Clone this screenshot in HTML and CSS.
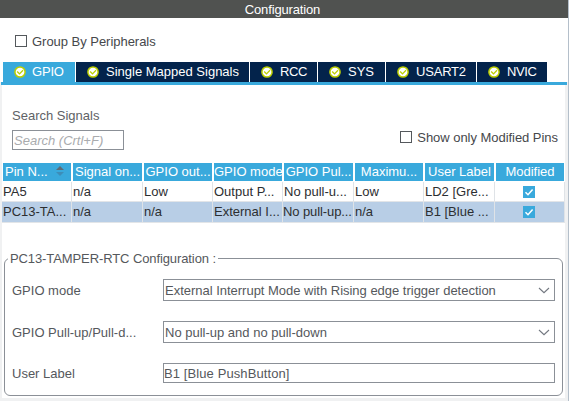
FILE: index.html
```html
<!DOCTYPE html>
<html lang="en">
<head>
<meta charset="utf-8">
<title>Configuration</title>
<link rel="stylesheet" href="styles.css">
</head>
<body>
<svg width="0" height="0" class="defs" aria-hidden="true">
  <symbol id="ok" viewBox="0 0 12 12">
    <circle cx="6" cy="6" r="5.1" fill="#fff" stroke="#bccf00" stroke-width="1.5"/>
    <path d="M3.2 5.5 5.5 7.9 9 4.3" fill="none" stroke="#bccf00" stroke-width="1.3"/>
  </symbol>
  <symbol id="tick" viewBox="0 0 12 12">
    <path d="M2.5 6.2 5 8.7 9.6 3.4" fill="none" stroke="#fff" stroke-width="1.5"/>
  </symbol>
  <symbol id="chevron" viewBox="0 0 12 7">
    <path d="M1 1 6 5.7 11 1" fill="none" stroke="#737880" stroke-width="1.1"/>
  </symbol>
</svg>
<div class="window">
  <header class="title">Configuration</header>
  <label class="group"><span class="box"></span><span>Group By Peripherals</span></label>
  <nav class="tabs">
    <div class="tab active"><svg class="ok"><use href="#ok"/></svg><span>GPIO</span></div>
    <div class="tab single"><svg class="ok"><use href="#ok"/></svg><span>Single Mapped Signals</span></div>
    <div class="tab rcc"><svg class="ok"><use href="#ok"/></svg><span>RCC</span></div>
    <div class="tab sys"><svg class="ok"><use href="#ok"/></svg><span>SYS</span></div>
    <div class="tab usart"><svg class="ok"><use href="#ok"/></svg><span>USART2</span></div>
    <div class="tab nvic"><svg class="ok"><use href="#ok"/></svg><span>NVIC</span></div>
  </nav>
  <main class="panel">
    <section class="search">
      <div>
        <div class="search-label">Search Signals</div>
        <div class="search-input">Search (Crtl+F)</div>
      </div>
      <label class="modified-only"><span class="box"></span><span>Show only Modified Pins</span></label>
    </section>
    <section class="table">
      <div class="row head">
        <div class="sorted"><span>Pin N...</span><svg class="sort" viewBox="0 0 8 10"><path d="M0 4 4 0 8 4z" fill="#5c6b76"/><path d="M0 6H8L4 10z" fill="#3d8db8"/></svg></div>
        <div>Signal on...</div><div>GPIO out...</div><div>GPIO mode</div><div>GPIO Pul...</div><div>Maximu...</div><div>User Label</div><div>Modified</div>
      </div>
      <div class="row">
        <div>PA5</div><div>n/a</div><div>Low</div><div>Output P...</div><div>No pull-u...</div><div>Low</div><div>LD2 [Gre...</div><div class="check"><svg><use href="#tick"/></svg></div>
      </div>
      <div class="row selected">
        <div>PC13-TA...</div><div>n/a</div><div>n/a</div><div>External I...</div><div class="pull-up">No pull-up...</div><div>n/a</div><div>B1 [Blue ...</div><div class="check"><svg><use href="#tick"/></svg></div>
      </div>
    </section>
    <fieldset class="config">
      <legend>PC13-TAMPER-RTC Configuration :</legend>
      <div class="fields">
        <span class="label">GPIO mode</span><div class="select"><span class="interrupt">External Interrupt Mode with Rising edge trigger detection</span><svg><use href="#chevron"/></svg></div>
        <span class="label">GPIO Pull-up/Pull-d...</span><div class="select"><span>No pull-up and no pull-down</span><svg><use href="#chevron"/></svg></div>
        <span class="label">User Label</span><div class="text">B1 [Blue PushButton]</div>
      </div>
    </fieldset>
  </main>
</div>
</body>
</html>
```
FILE: styles.css
```css
* { box-sizing: border-box; }
body {
  margin: 0;
  background: #f0f1f2;
  font: 13px/16px "Liberation Sans", Arial, sans-serif;
  color: #46484b;
  white-space: nowrap;
}
.defs { position: absolute; }
.window {
  width: 569px;
  height: 401px;
  overflow: hidden;
  border-right: 1px solid #b4bfca;
  background: linear-gradient(#fff, #fff) 0 0 / 100% 82px no-repeat #f0f1f2;
}
.title {
  height: 18px;
  padding-right: 3px;
  background: #505250;
  color: #fff;
  text-align: center;
  letter-spacing: -.15px;
  line-height: 19px;
}
.group {
  display: flex;
  align-items: center;
  gap: 5px;
  height: 44px;
  padding: 3px 0 0 15px;
  letter-spacing: -.03px;
}
.box { flex: none; width: 12px; height: 12px; border: 1px solid #54585c; }
.group .box { margin-top: -1px; }
.tabs {
  display: flex;
  gap: 1px;
  height: 23px;
  margin: 0 1px;
  padding-left: 2px;
  border-bottom: 3px solid #39a9dc;
}
.tab {
  display: flex;
  align-items: center;
  gap: 7px;
  padding-left: 11px;
  padding-bottom: 1px;
  background: #03234b;
  color: #fff;
}
.active { width: 72px; gap: 6px; background: #39a9dc; letter-spacing: -.2px; }
.single { width: 173px; }
.rcc, .sys { width: 67px; }
.rcc { letter-spacing: -.4px; }
.usart { width: 90px; letter-spacing: -.2px; }
.nvic { width: 70px; letter-spacing: -.4px; }
.ok { flex: none; width: 12px; height: 12px; }
.panel { width: 563px; height: 313px; margin-left: 2px; background: #fff; }
.search { display: flex; justify-content: space-between; height: 78px; padding: 23px 6px 0 10px; }
.search-label { height: 22px; color: #606266; }
.search-input {
  width: 112px;
  height: 20px;
  padding-left: 1px;
  border: 1px solid #8b9097;
  color: #a9abae;
  font-style: italic;
  line-height: 19px;
}
.modified-only {
  display: flex;
  align-items: center;
  gap: 5px;
  height: 16px;
  margin-top: 22px;
  margin-right: 1px;
  letter-spacing: -.04px;
}
.modified-only .box { margin-top: -2px; }
.row {
  display: grid;
  grid-template-columns: 70px 71px 70px 70px 71px 70px 71px 70px;
  height: 20px;
  border-bottom: 1px solid #e2e5e8;
  color: #2c2e31;
  line-height: 19px;
}
.row > div { overflow: hidden; padding-left: 1px; border-right: 1px solid #dfe3e7; }
.head { height: 19px; border-bottom: 1px solid #fff; line-height: 18px; }
.row.head > div {
  padding: 0;
  border: solid #fff;
  border-width: 0 1px;
  background: #39a9dc;
  color: #fff;
  text-align: center;
}
.row.head .sorted { display: flex; align-items: center; gap: 8px; padding-left: 2px; }
.sort { width: 8px; height: 10px; margin-top: -2px; }
.selected { height: 21px; background: #b8cee6; line-height: 20px; }
.row .pull-up { padding-left: 0; letter-spacing: -.1px; }
.row .check { display: grid; place-items: center; padding: 0 1px 0 0; }
.check svg { width: 12px; height: 12px; background: #39a9dc; }
.config {
  height: 146px;
  margin: 27px 2px 0;
  padding: 0;
  border: 1px solid #8b9097;
  border-radius: 6px;
  color: #55585c;
}
.config legend { margin-left: 3px; padding: 1px 2px 0; line-height: 15px; letter-spacing: -.1px; }
.fields {
  display: grid;
  grid-template-columns: 151px 392px;
  grid-template-rows: 22px 22px 20px;
  row-gap: 20px;
  align-items: center;
  padding: 13px 0 0 7px;
}
.label { padding-top: 2px; }
.select, .text { height: 100%; border: 1px solid #8b9097; line-height: 20px; }
.select { display: flex; align-items: center; justify-content: space-between; padding-right: 4px; padding-left: 1px; }
.select span { padding-top: 2px; }
.select svg { width: 12px; height: 7px; }
.interrupt { letter-spacing: -.015px; }
.text { line-height: 20px; letter-spacing: .1px; }
```
